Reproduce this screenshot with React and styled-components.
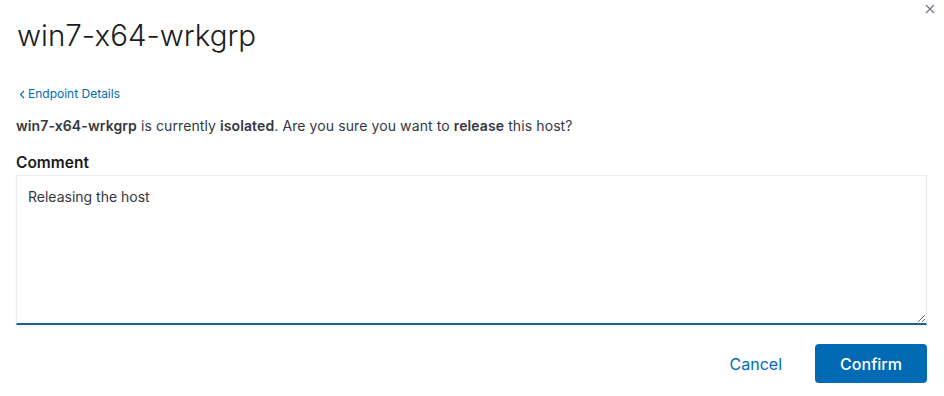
import styled, { createGlobalStyle } from "styled-components";

const GlobalStyle = createGlobalStyle`
    html, body {
        margin: 0;
        padding: 0;
        background: #ffffff;
        font-family: Inter, "Noto Sans", sans-serif;
        color: #343741;
    }
`;

const Modal = styled.div`
    position: relative;
    width: 944px;
    height: 396px;
    box-sizing: border-box;
    padding: 17px 17px 0 16px;
    display: flex;
    flex-direction: column;
`;

const CloseButton = styled.button`
    position: absolute;
    top: 3px;
    right: 8px;
    width: 12px;
    height: 12px;
    padding: 0;
    border: none;
    background: transparent;
    cursor: pointer;
    display: flex;
    align-items: center;
    justify-content: center;
`;

const Title = styled.h1`
    margin: 0 0 0 1px;
    font-size: 29.5px;
    line-height: 37px;
    font-weight: 300;
    color: #1a1c21;
`;

const BackLink = styled.a`
    margin-top: 32px;
    margin-left: 3px;
    display: flex;
    align-items: center;
    gap: 3px;
    font-size: 12px;
    line-height: 16px;
    color: #006bb4;
    text-decoration: none;
`;

const Message = styled.p`
    margin: 14px 0 0 0;
    font-size: 14px;
    line-height: 20px;
    letter-spacing: 0.1px;
    color: #343741;

    strong {
        font-weight: 600;
    }
`;

const Label = styled.label`
    margin-top: 17px;
    font-size: 15.5px;
    line-height: 20px;
    font-weight: 600;
    color: #1a1c21;
`;

const TextArea = styled.textarea`
    margin-top: 2px;
    width: 911px;
    height: 150px;
    box-sizing: border-box;
    padding: 11px 11px;
    border: 1px solid #ececec;
    border-bottom: 2px solid #1f5f94;
    border-radius: 0;
    outline: none;
    resize: both;
    font-family: Inter, "Noto Sans", sans-serif;
    font-size: 14px;
    line-height: 20px;
    color: #343741;
    background: #ffffff;
    box-shadow: 0 2px 4px rgba(0, 107, 180, 0.06);
`;

const Footer = styled.div`
    margin-top: 19px;
    display: flex;
    justify-content: flex-end;
    align-items: center;
    gap: 33px;
`;

const Button = styled.button`
    height: 39px;
    width: ${(p) => (p.$primary ? "112px" : "auto")};
    padding: 0;
    border: none;
    border-radius: 4px;
    background: ${(p) => (p.$primary ? "#006bb4" : "transparent")};
    color: ${(p) => (p.$primary ? "#ffffff" : "#006bb4")};
    font-family: Inter, "Noto Sans", sans-serif;
    font-size: 16px;
    font-weight: ${(p) => (p.$primary ? 500 : 400)};
    cursor: pointer;
`;

export default function App() {
    return (
        <>
            <GlobalStyle />
            <Modal>
                <CloseButton aria-label="Close">
                    <svg width="10" height="10" viewBox="0 0 10 10">
                        <path d="M1 1 L9 9 M9 1 L1 9" stroke="#69707d" strokeWidth="1.1" fill="none" />
                    </svg>
                </CloseButton>
                <Title>win7-x64-wrkgrp</Title>
                <BackLink href="#">
                    <svg width="6" height="9" viewBox="0 0 6 9">
                        <path d="M5 1 L1.5 4.5 L5 8" stroke="#006bb4" strokeWidth="1.1" fill="none" />
                    </svg>
                    Endpoint Details
                </BackLink>
                <Message>
                    <strong>win7-x64-wrkgrp</strong> is currently <strong>isolated</strong>. Are you sure you want to <strong>release</strong> this host?
                </Message>
                <Label htmlFor="comment">Comment</Label>
                <TextArea id="comment" defaultValue="Releasing the host" />
                <Footer>
                    <Button>Cancel</Button>
                    <Button $primary>Confirm</Button>
                </Footer>
            </Modal>
        </>
    );
}
